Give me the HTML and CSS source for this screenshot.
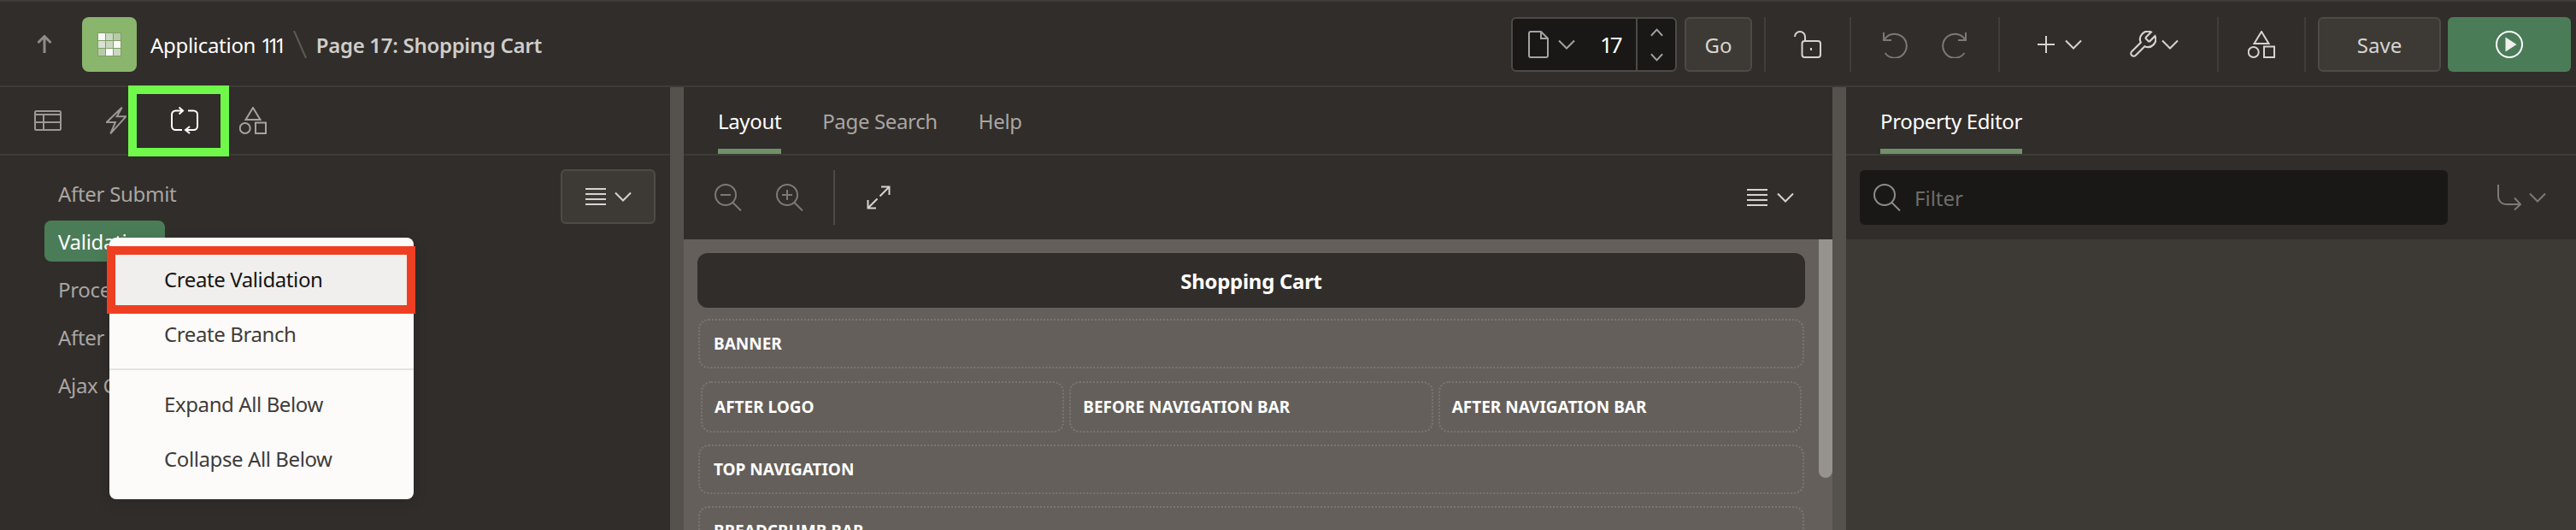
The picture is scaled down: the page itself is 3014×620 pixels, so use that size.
FILE: index.html
```html
<!DOCTYPE html>
<html lang="en">
<head>
<meta charset="utf-8">
<title>Page 17: Shopping Cart</title>
<link rel="stylesheet" href="styles.css">
</head>
<body>
<div class="app">
  <header class="topbar">
    <div class="crumbs">
      <span class="nav-up">
        <svg class="i-up" viewBox="0 0 18 22"><path d="M9 21V1.5M1.5 9 9 1.5 16.5 9"/></svg>
      </span>
      <span class="logo">
        <svg class="i-grid" viewBox="0 0 28 28">
          <rect width="28" height="28" rx="1" class="grid-bg"/>
          <rect x="1" y="1" width="8" height="8" fill-opacity=".95"/>
          <rect x="10" y="1" width="8" height="8" fill-opacity=".6"/>
          <rect x="19" y="1" width="8" height="8" fill-opacity=".45"/>
          <rect x="1" y="10" width="8" height="8" fill-opacity=".7"/>
          <rect x="10" y="10" width="8" height="8" fill-opacity=".6"/>
          <rect x="19" y="10" width="8" height="8" fill-opacity=".95"/>
          <rect x="1" y="19" width="8" height="8" fill-opacity=".45"/>
          <rect x="10" y="19" width="8" height="8"/>
          <rect x="19" y="19" width="8" height="8" fill-opacity=".6"/>
        </svg>
      </span>
      <span class="app-name">Application <span class="narrow-num">111</span></span>
      <svg class="i-slash" viewBox="0 0 16 32"><path d="M1 0 15 32"/></svg>
      <span class="page-name">Page 17: Shopping Cart</span>
    </div>

    <div class="actions">
      <div class="page-picker">
        <div class="picker-main">
          <svg class="i-32 soft" viewBox="0 0 24 32"><path d="M1 3a2 2 0 0 1 2-2h12l8 8v20a2 2 0 0 1-2 2H3a2 2 0 0 1-2-2zM15 1v8h8"/></svg>
          <svg class="i-chev soft" viewBox="0 0 20 12"><path d="M1 1.500 10 10.500 19 1.500"/></svg>
          <span class="page-no">17</span>
        </div>
        <div class="stepper">
          <svg class="i-step" viewBox="0 0 16 10"><path d="M1 9 8 1.500 15 9"/></svg>
          <svg class="i-step" viewBox="0 0 16 10"><path d="M1 1 8 8.500 15 1"/></svg>
        </div>
      </div>
      <button class="btn btn-go">Go</button>
      <span class="divider"></span>
      <span class="tool tool-lock">
        <svg class="i-lock" viewBox="0 0 32 32"><path d="M1 7a6 6 0 0 1 12 0v5"/><rect x="9.500" y="12" width="21.500" height="19" rx="3"/><path d="M20 20v3"/></svg>
      </span>
      <span class="divider"></span>
      <span class="tool tool-undo">
        <svg class="i-hist" viewBox="0 0 30 32"><path d="M2 2v9h9M2.500 11A14 14 0 1 1 3.500 26"/></svg>
      </span>
      <span class="tool tool-undo">
        <svg class="i-hist" viewBox="0 0 30 32"><path d="M28 2v9h-9M27.500 11A14 14 0 1 0 26.500 26"/></svg>
      </span>
      <span class="divider"></span>
      <span class="menu-add">
        <svg class="i-plus" viewBox="0 0 20 20"><path d="M10 0v20M0 10h20"/></svg>
        <svg class="i-chev bright" viewBox="0 0 20 12"><path d="M1 1.500 10 10.500 19 1.500"/></svg>
      </span>
      <span class="menu-tools">
        <svg class="i-wrench" viewBox="1.500 1.500 21 21"><path d="M14.700 6.300a1 1 0 0 0 0 1.400l1.600 1.600a1 1 0 0 0 1.400 0l3.770-3.770a6 6 0 0 1-7.940 7.940l-6.910 6.910a2.120 2.120 0 0 1-3-3l6.910-6.910a6 6 0 0 1 7.940-7.940l-3.760 3.760z"/></svg>
        <svg class="i-chev bright" viewBox="0 0 20 12"><path d="M1 1.500 10 10.500 19 1.500"/></svg>
      </span>
      <span class="divider"></span>
      <span class="tool tool-shapes">
        <svg class="i-32 bright" viewBox="0 0 32 32"><path d="M16 1 24.500 15h-17z"/><circle cx="6.700" cy="25" r="6"/><rect x="19" y="18.500" width="12" height="12.500"/></svg>
      </span>
      <span class="divider"></span>
      <button class="btn btn-save">Save</button>
      <button class="btn btn-run">
        <svg class="i-play" viewBox="0 0 32 32"><circle cx="16" cy="16" r="15"/><path class="play-tri" d="M11.500 7.500 24.500 16 11.500 24.500z"/></svg>
      </button>
    </div>
  </header>

  <main class="workspace">
    <section class="pane pane-left">
      <nav class="tabbar icon-tabs">
        <span class="icon-tab">
          <svg class="i-table" viewBox="0 0 32 24"><rect x="1" y="1" width="30" height="22" rx="1.500"/><path d="M1 5h30M1 14h30M11 5v18"/></svg>
        </span>
        <span class="icon-tab">
          <svg class="i-bolt" viewBox="0 0 24 32"><path d="M18.700 .7 .7 18H11L5.300 31.300 23.300 11.300H12.700z"/></svg>
        </span>
        <span class="icon-tab active-icon">
          <svg class="i-32 white" viewBox="0 0 32 32"><path d="M9.500 .5 14 4.500 9.500 8.500M14 4.500H5.500A4.500 4.500 0 0 0 1 9v13.500A4.500 4.500 0 0 0 5.500 27H13M20 4.500h6.500A4.500 4.500 0 0 1 31 9v13.500a4.500 4.500 0 0 1-4.500 4.500H17M22 23l-5 4 5 4"/></svg>
          <span class="mark-green"></span>
        </span>
        <span class="icon-tab">
          <svg class="i-32 mid" viewBox="0 0 32 32"><path d="M16 1 24.500 15h-17z"/><circle cx="6.700" cy="25" r="6"/><rect x="19" y="18.500" width="12" height="12.500"/></svg>
        </span>
      </nav>
      <div class="tree-area">
        <ul class="tree">
          <li class="tree-row">After Submit</li>
          <li class="tree-row selected"><span class="chip">Validating</span></li>
          <li class="tree-row">Processing</li>
          <li class="tree-row">After Processing</li>
          <li class="tree-row">Ajax Callback</li>
        </ul>
        <button class="btn btn-tree">
          <svg class="i-burger" viewBox="0 0 24 20"><path d="M0 1h24M0 7h24M0 13h24M0 19h24"/></svg>
          <svg class="i-chev bright" viewBox="0 0 20 12"><path d="M1 1.500 10 10.500 19 1.500"/></svg>
        </button>
      </div>
      <div class="context-menu">
        <div class="menu-item first">Create Validation</div>
        <div class="menu-item">Create Branch</div>
        <div class="menu-sep"></div>
        <div class="menu-item">Expand All Below</div>
        <div class="menu-item">Collapse All Below</div>
        <span class="mark-red"></span>
      </div>
    </section>

    <div class="splitter"></div>

    <section class="pane pane-center">
      <nav class="tabbar text-tabs">
        <span class="tab active">Layout</span>
        <span class="tab">Page Search</span>
        <span class="tab">Help</span>
      </nav>
      <div class="toolbar">
        <svg class="i-zoom" viewBox="0 0 32 32"><circle cx="13" cy="13" r="12"/><path d="m21.500 22 9.500 9.500M7 13h12"/></svg>
        <svg class="i-zoom zoom-in" viewBox="0 0 32 32"><circle cx="13" cy="13" r="12"/><path d="m21.500 22 9.500 9.500M7 13h12M13 7v12"/></svg>
        <span class="tool-sep"></span>
        <svg class="i-expand" viewBox="0 0 28 28"><path d="M17 1.500h9.500V11M26.500 1.500 15.500 12.500M11 26.500H1.500V17M1.500 26.500 12.500 15.500"/></svg>
        <span class="burger-menu">
          <svg class="i-burger" viewBox="0 0 24 20"><path d="M0 1h24M0 7h24M0 13h24M0 19h24"/></svg>
          <svg class="i-chev bright" viewBox="0 0 20 12"><path d="M1 1.500 10 10.500 19 1.500"/></svg>
        </span>
      </div>
      <div class="canvas">
        <div class="page-title">Shopping Cart</div>
        <div class="region">BANNER</div>
        <div class="region-row">
          <div class="region cell">AFTER LOGO</div>
          <div class="region cell">BEFORE NAVIGATION BAR</div>
          <div class="region cell">AFTER NAVIGATION BAR</div>
        </div>
        <div class="region">TOP NAVIGATION</div>
        <div class="region">BREADCRUMB BAR</div>
        <span class="scroll-thumb"></span>
      </div>
    </section>

    <div class="splitter"></div>

    <section class="pane pane-right">
      <nav class="tabbar text-tabs">
        <span class="tab active">Property Editor</span>
      </nav>
      <div class="toolbar filter-bar">
        <div class="filter">
          <svg class="i-search" viewBox="0 0 32 32"><circle cx="13" cy="13" r="12"/><path d="m21.500 22 9.500 9.500"/></svg>
          <span class="filter-text">Filter</span>
        </div>
        <span class="jump">
          <svg class="i-jump" viewBox="0 0 28 30"><path d="M1 0v14a9 9 0 0 0 9 9h17M20 15.500 27 23l-7 6.500"/></svg>
          <svg class="i-chev dim" viewBox="0 0 20 12"><path d="M1 1.500 10 10.500 19 1.500"/></svg>
        </span>
      </div>
      <div class="right-body"></div>
    </section>
  </main>
</div>
</body>
</html>
```
FILE: styles.css
```css
* { box-sizing: border-box; }
html, body { margin: 0; padding: 0; }
body { background: #312d2a; font-family: "Noto Sans", "Open Sans", sans-serif; color: #fff; }
ul { list-style: none; margin: 0; padding: 0; }
svg { display: block; flex: none; fill: none; stroke: currentColor; stroke-width: 2; }

.app { width: 3014px; height: 620px; overflow: hidden; display: flex; flex-direction: column; }

/* top bar */
.topbar {
  height: 102px; flex: none; display: flex; justify-content: space-between;
  padding: 18px 6px 16px 0;
  border-top: 2px solid #3f3b38; border-bottom: 2px solid #3f3b38;
}
.crumbs, .actions { display: flex; align-items: center; }
.nav-up { width: 96px; padding-left: 43px; color: #8f8c88; }
.i-up { width: 18px; height: 22px; stroke-width: 3; }
.logo { width: 64px; height: 64px; border-radius: 8px; background: #8ab56c; display: flex; align-items: center; justify-content: center; }
.i-grid { width: 28px; height: 28px; stroke: none; fill: #fff; }
.grid-bg { fill: #7d9f64; }
.app-name { margin-left: 16px; font-size: 24px; letter-spacing: -.3px; color: #fff; }
.narrow-num { letter-spacing: -5.500px; margin-right: 4px; }
.i-slash { width: 16px; height: 32px; margin: 0 11px 0 9px; color: #5e5b57; }
.page-name { font-size: 24px; font-weight: 600; letter-spacing: -.3px; color: #cfcdca; }

.page-picker { width: 194px; height: 64px; display: flex; background: #191816; border: 2px solid #4e4a46; border-radius: 6px; }
.picker-main { width: 146px; display: flex; align-items: center; padding-left: 18px; border-right: 2px solid #4e4a46; }
.i-32 { width: 32px; height: 32px; }
.picker-main .i-32 { width: 24px; }
.soft { color: #a5a3a0; }
.bright { color: #d6d4d1; }
.mid { color: #a5a3a0; }
.white { color: #fff; }
.dim { color: #7d7a76; }
.i-chev { width: 20px; height: 12px; margin-left: 11px; }
.page-no { margin-left: 29px; font-size: 26px; letter-spacing: -3px; color: #fff; }
.stepper { flex: 1; display: flex; flex-direction: column; align-items: center; justify-content: center; gap: 19px; color: #a5a3a0; }
.i-step { width: 15px; height: 10px; }

.btn {
  height: 64px; border-radius: 6px; background: #3d3a35; border: 2px solid #4e4a46;
  color: #d6d4d1; font: 24px "Noto Sans", sans-serif; padding: 0;
  display: flex; align-items: center; justify-content: center;
}
.btn-go { width: 79px; margin-left: 9px; }
.divider { width: 2px; height: 64px; background: #413e3a; }
.actions > .btn-go + .divider { margin-left: 14px; }
.tool { display: flex; align-items: center; justify-content: center; }
.tool-lock { width: 98px; color: #d6d4d1; }
.i-lock { width: 32px; height: 32px; }
.tool-undo { width: 70px; color: #7d7a76; }
.tool-undo:nth-of-type(n) { flex: none; }
.i-hist { width: 30px; height: 32px; }
.tool-lock + .divider { margin-right: 16px; }
.tool-undo + .divider { margin-left: 16px; }
.menu-add, .menu-tools { display: flex; align-items: center; }
.menu-add { margin-left: 44px; color: #d6d4d1; }
.i-plus { width: 20px; height: 20px; }
.menu-add .i-chev { margin-left: 12px; }
.menu-tools { margin-left: 55px; margin-right: 45px; color: #d6d4d1; }
.menu-tools .i-chev { margin-left: 6px; }
.i-wrench { width: 32px; height: 32px; stroke-width: 1.400; }
.tool-shapes { width: 100px; }
.btn-save { width: 144px; margin-left: 14px; }
.btn-run { width: 144px; margin-left: 8px; background: #4b7c58; border: 0; color: #fff; }
.i-play { width: 32px; height: 32px; }
.play-tri { fill: #f0efed; stroke: none; }

/* panes */
.workspace { flex: 1; min-height: 0; display: flex; }
.pane { display: flex; flex-direction: column; position: relative; }
.pane-left { width: 784px; }
.pane-center { width: 1344px; }
.pane-right { width: 854px; }
.splitter { width: 16px; background: #55514d; }

.tabbar { height: 80px; flex: none; display: flex; border-bottom: 2px solid #3f3b38; }
.icon-tabs { padding-left: 16px; }
.icon-tab { width: 80px; height: 78px; display: flex; align-items: center; justify-content: center; position: relative; color: #9b9895; }
.i-table { width: 32px; height: 24px; }
.i-bolt { width: 24px; height: 32px; }
.mark-green { position: absolute; left: -26px; top: -2px; width: 118px; height: 83px; border: 10px solid #70f84a; }

.tree-area { flex: 1; display: flex; justify-content: space-between; padding: 16px 17px 0 52px; }
.tree-row { height: 56px; padding-left: 16px; display: flex; align-items: center; font-size: 24px; letter-spacing: -.3px; color: #a8a6a3; }
.tree-row.selected { padding-left: 0; }
.chip { width: 141px; height: 48px; padding-left: 16px; display: flex; align-items: center; border-radius: 8px; background: #4b7c58; color: #fff; overflow: hidden; white-space: nowrap; }
.btn-tree { width: 111px; }
.i-burger { width: 24px; height: 20px; color: #d6d4d1; }
.btn-tree .i-chev { margin-left: 10px; }

.context-menu {
  position: absolute; left: 128px; top: 176px; width: 356px; height: 306px;
  padding: 17px 0 15px; background: #fcfbfa; border-radius: 8px;
  box-shadow: 0 4px 16px rgba(0,0,0,.15);
}
.menu-item { height: 64px; padding: 0 0 2px 64px; display: flex; align-items: center; font-size: 24px; letter-spacing: -.4px; color: #3f3c39; }
.menu-item.first { background: #f0efed; color: #161513; }
.menu-sep { height: 2px; margin: 8px 0; background: #e5e3e0; }
.mark-red { position: absolute; left: -3px; top: 10px; width: 361px; height: 79px; border: 10px solid #ee3f23; }

.text-tabs { padding-left: 40px; gap: 48px; }
.tab { height: 78px; padding-top: 23px; font-size: 24px; letter-spacing: -.35px; color: #a8a6a3; border-bottom: 6px solid transparent; }
.tab.active { color: #fff; border-bottom-color: #6f9167; }

.toolbar { height: 98px; flex: none; display: flex; align-items: center; padding-left: 36px; }
.i-zoom { width: 32px; height: 32px; color: #7d7a76; }
.zoom-in { margin-left: 40px; }
.tool-sep { width: 2px; height: 64px; margin: 0 37px 0 35px; background: #4e4a46; }
.i-expand { width: 28px; height: 28px; color: #d6d4d1; }
.burger-menu { margin-left: auto; margin-right: 45px; display: flex; align-items: center; }

.canvas { flex: 1; min-height: 0; position: relative; overflow: hidden; background: #645f5a; padding: 16px 33px 0 17px; }
.page-title { height: 64px; margin: 0 -1px 13px -1px; border-radius: 12px; background: #312d2a; display: flex; align-items: center; justify-content: center; font-size: 24px; font-weight: 700; letter-spacing: -.3px; }
.region { height: 58px; margin-bottom: 14px; padding-left: 16px; display: flex; align-items: center; border: 2px dotted #7a7672; border-radius: 12px; font-size: 19px; font-weight: 700; color: #fff; }
.region-row { display: flex; gap: 6px; padding: 1px 3px 0; margin-bottom: 14px; }
.region.cell { flex: 1; height: 60px; margin: 0; padding-left: 14px; }
.scroll-thumb { position: absolute; right: 0; top: 0; width: 16px; height: 279px; background: #96928d; border-radius: 0 0 8px 8px; }

.filter-bar { padding-left: 16px; }
.filter { width: 688px; height: 64px; background: #191816; border-radius: 6px; display: flex; align-items: center; padding-left: 16px; }
.i-search { width: 32px; height: 32px; color: #8f8c88; }
.filter-text { margin-left: 16px; font-size: 24px; color: #6f6c68; }
.jump { margin-left: 58px; display: flex; align-items: center; color: #7d7a76; }
.i-jump { width: 28px; height: 30px; }
.jump .i-chev { margin-left: 9px; }
.right-body { flex: 1; background: #3d3a35; }
```
